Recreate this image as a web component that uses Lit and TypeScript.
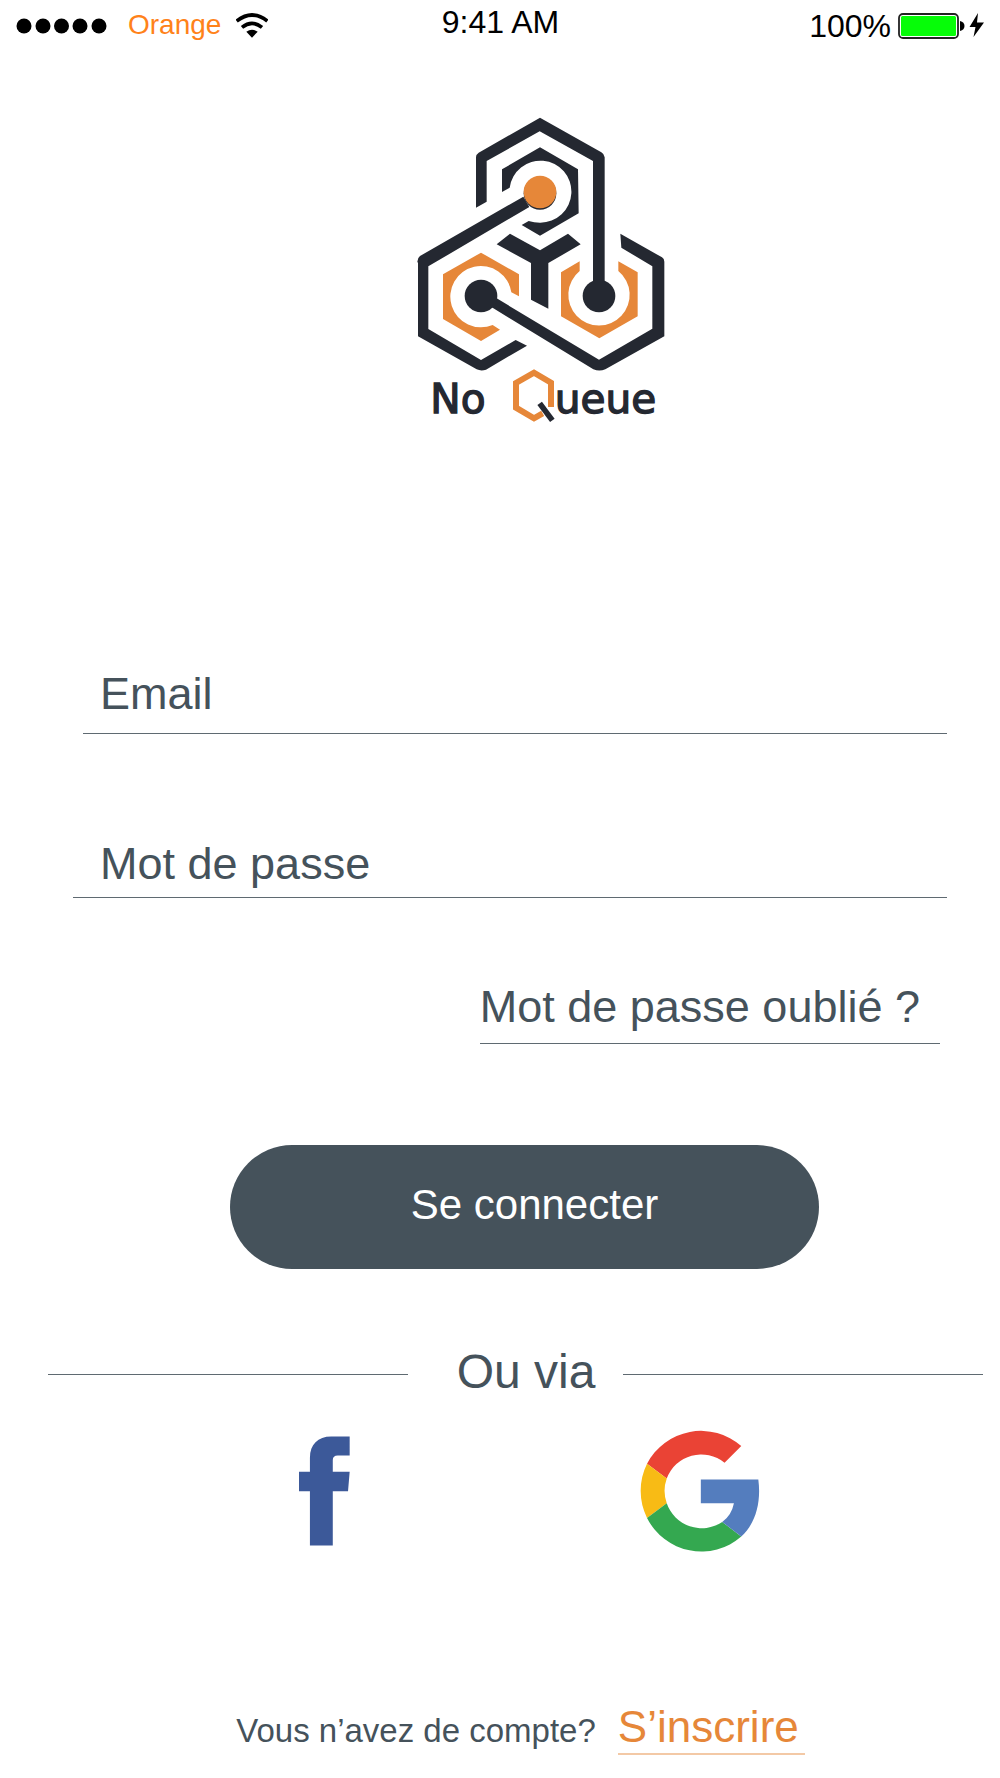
import { LitElement, html, css } from "lit";
import { customElement } from "lit/decorators.js";

@customElement("status-bar")
class StatusBar extends LitElement {
  static styles = css`
    :host {
      display: grid;
      grid-template-columns: 1fr auto 1fr;
      align-items: start;
      padding: 0 15px 0 16px;
      color: #000;
    }
    .left,
    .right {
      display: flex;
      align-items: center;
    }
    .left {
      font-size: 28px;
      line-height: 50px;
    }
    .right {
      justify-content: flex-end;
      font-size: 32px;
      line-height: 52px;
      gap: 7px;
    }
    .time {
      font-size: 32px;
      line-height: 44px;
    }
    .carrier {
      color: #ff8219;
      margin: 0 15px 0 20px;
    }
    svg {
      display: block;
    }
  `;

  render() {
    return html`
      <div class="left">
        <svg width="92" height="48" viewBox="0 0 92 48" aria-hidden="true">
          <circle cx="8" cy="25" r="7.500" />
          <circle cx="27" cy="25" r="7.500" />
          <circle cx="45.500" cy="25" r="7.500" />
          <circle cx="64" cy="25" r="7.500" />
          <circle cx="83" cy="25" r="7.500" />
        </svg>
        <span class="carrier">Orange</span>
        <svg width="32" height="48" viewBox="0 0 96 144" aria-hidden="true">
          <path d="M2 60 Q48 24 94 60" fill="none" stroke="#000" stroke-width="11" />
          <path d="M18 79 Q48 55 78 79" fill="none" stroke="#000" stroke-width="11" />
          <path d="M31 92 Q48 80 65 92 L48 110 Z" />
        </svg>
      </div>
      <span class="time">9:41 AM</span>
      <div class="right">
        <span>100%</span>
        <svg width="87" height="26" viewBox="0 0 87 26" aria-hidden="true">
          <rect x="1" y="1" width="59" height="24" rx="4" fill="#fff" stroke="#222" stroke-width="1.800" />
          <rect x="3" y="3" width="55" height="20" rx="1.500" fill="#06fd08" />
          <path d="M62 8 Q66.500 9 66.500 13 Q66.500 17 62 18 Z" />
          <path d="M80 0 L71.500 14 H77.500 L75.500 24 L86 9.500 H79 Z" />
        </svg>
      </div>
    `;
  }
}

@customElement("brand-logo")
class BrandLogo extends LitElement {
  static styles = css`
    :host {
      display: block;
    }
    svg {
      display: block;
    }
    .dark {
      fill: #242831;
    }
    .accent {
      fill: #e68739;
    }
    .word {
      font-family: "DejaVu Sans", sans-serif;
      font-size: 122px;
      stroke: #242831;
      stroke-width: 4px;
    }
  `;

  render() {
    return html`
      <svg width="280" height="330" viewBox="0 0 840 990" role="img" aria-label="No Queue">
        <path class="dark" d="M228 308 V157 Q228 148 236 143 L420 38 L604 142 Q613 147 614 157 V540 H579 V168 L419 79 L260 168 V290 Z" />
        <path class="dark" d="M370 275 L60 453 Q52 459 52 470 L54 474 V694 L230 793 Q243 799 258 794 L381 722 L347 705 L243 765 L85 672 V484 L388 306 Z" />
        <path class="dark" d="M290 580 L597 764 L757 671 V484 L664 428 L661 386 L786 457 Q793 461 793 470 V694 L616 793 Q598 800 580 793 L274 606 Z" />
        <path class="dark" d="M306 261 V193 L420 127 L534 193 L536 325 L420 392 L365 360 L386 348 Q402 353 420 353 A93 93 0 1 0 329 248 Z" />
        <path class="dark" d="M290 418 L330 386 L420 436 L504 386 L542 418 L445 474 V611 L393 584 V474 Z" />
        <path class="accent" d="M243 443 L357 508 V574 L334 562 A92 92 0 1 0 278 660 L300 674 L243 708 L129 642 V508 Z" />
        <path class="accent" d="M539 469 V498 A92 92 0 1 0 655 498 V469 L713 502 V634 L598 700 L483 634 V502 Z" />
        <circle class="dark" cx="420" cy="265" r="49" />
        <circle class="accent" cx="420" cy="261" r="49" />
        <circle class="dark" cx="243" cy="573" r="49" />
        <circle class="dark" cx="597" cy="573" r="49" />
        <text class="dark word" x="91" y="923">No</text>
        <path d="M453 906 V833 L402 803 L348 834 V908 L402 940 L428 925" fill="none" stroke="#e68739" stroke-width="18" />
        <path d="M419 895 L457 946" stroke="#242831" stroke-width="17" />
        <text class="dark word" x="464" y="923">ueue</text>
      </svg>
    `;
  }
}

@customElement("app-root")
class AppRoot extends LitElement {
  static styles = css`
    :host {
      display: block;
      background: #fff;
      color: #45525b;
      font-family: "Liberation Sans", Arial, sans-serif;
      font-size: 45px;
      line-height: 52px;
    }
    .page {
      display: flex;
      flex-direction: column;
    }
    .logo {
      align-self: center;
      margin: 53px 0 0 80px;
    }
    .form {
      display: flex;
      flex-direction: column;
      margin: 233px 53px 0 73px;
    }
    .field {
      box-sizing: content-box;
      height: 52px;
      border: 0;
      border-bottom: 1px solid #5f6a71;
      border-radius: 0;
      outline: 0;
      background: none;
      color: inherit;
      font: inherit;
      min-width: 0;
    }
    .field::placeholder {
      color: inherit;
      opacity: 1;
    }
    .email {
      margin-left: 10px;
      padding: 0 0 13px 17px;
    }
    .password {
      margin-top: 104px;
      padding: 0 0 7px 27px;
    }
    .forgot {
      align-self: flex-end;
      margin: 83px 7px 0 0;
      padding: 0 20px 10px 0;
      border-bottom: 1px solid #5f6a71;
      color: inherit;
      text-decoration: none;
    }
    .submit {
      width: 67.4%;
      align-self: center;
      margin: 101px 0 0 29px;
      padding: 0 0 4px 20px;
      height: 124px;
      border: 0;
      border-radius: 62px;
      background: #45525b;
      color: #fff;
      font: inherit;
      font-size: 42px;
    }
    .divider {
      display: flex;
      align-items: center;
      gap: 28px;
      margin: 77px 17px 0 48px;
      font-size: 48px;
      line-height: 52px;
    }
    .rule {
      flex: 1;
      height: 1px;
      background: #5f6a71;
    }
    .divider-label {
      padding: 0 0 4px 21px;
    }
    .social {
      display: flex;
      justify-content: center;
      align-items: center;
      gap: 290px;
      margin: 28px 0 0 58px;
    }
    .provider {
      display: block;
      padding: 0;
      border: 0;
      background: none;
    }
    .provider svg {
      display: block;
    }
    .signup {
      display: flex;
      justify-content: center;
      align-items: baseline;
      gap: 22px;
      margin: 149px 0 20px 41px;
      font-size: 33px;
    }
    .signup-link {
      padding: 0 6px 0 0;
      border-bottom: 2px solid #f3c9a6;
      color: #e68739;
      font-size: 44px;
      text-decoration: none;
    }
  `;

  render() {
    return html`
      <main class="page">
        <status-bar></status-bar>
        <brand-logo class="logo"></brand-logo>
        <form class="form" @submit=${(e: Event) => e.preventDefault()}>
          <input class="field email" type="email" placeholder="Email" aria-label="Email" />
          <input class="field password" type="password" placeholder="Mot de passe" aria-label="Mot de passe" />
          <a class="forgot" href="#">Mot de passe oublié ?</a>
          <button class="submit" type="submit">Se connecter</button>
        </form>
        <div class="divider">
          <span class="rule"></span>
          <span class="divider-label">Ou via</span>
          <span class="rule"></span>
        </div>
        <div class="social">
          <button class="provider" type="button" aria-label="Facebook">
            <svg width="51" height="110" viewBox="55 51 154 329" aria-hidden="true">
              <path fill="#3c5999" d="M88 380 V216 H55 V157 H88 V115 C88 75 112 51 152 51 H208 V108 H172 Q157 108 157 122 V157 H208 L203 216 H157 V380 Z" />
            </svg>
          </button>
          <button class="provider" type="button" aria-label="Google">
            <svg width="120" height="122" viewBox="1082 33 359 365" aria-hidden="true">
              <path fill="#ea4335" d="M1385 81 L1335 131 A110 110 0 0 0 1162 178 L1103 134 A182 182 0 0 1 1385 81 Z" />
              <path fill="#f8bb15" d="M1103 134 L1162 178 A110 110 0 0 0 1162 252 L1103 296 A182 182 0 0 1 1103 134 Z" />
              <path fill="#34a850" d="M1103 296 L1162 252 A110 110 0 0 0 1328 308 L1385 352 A182 182 0 0 1 1103 296 Z" />
              <path fill="#547dbe" d="M1264 181 H1436 C1445 250 1428 312 1385 352 L1328 308 Q1356 288 1363 252 H1264 Z" />
            </svg>
          </button>
        </div>
        <div class="signup">
          <span>Vous n’avez de compte?</span>
          <a class="signup-link" href="#">S’inscrire</a>
        </div>
      </main>
    `;
  }
}
